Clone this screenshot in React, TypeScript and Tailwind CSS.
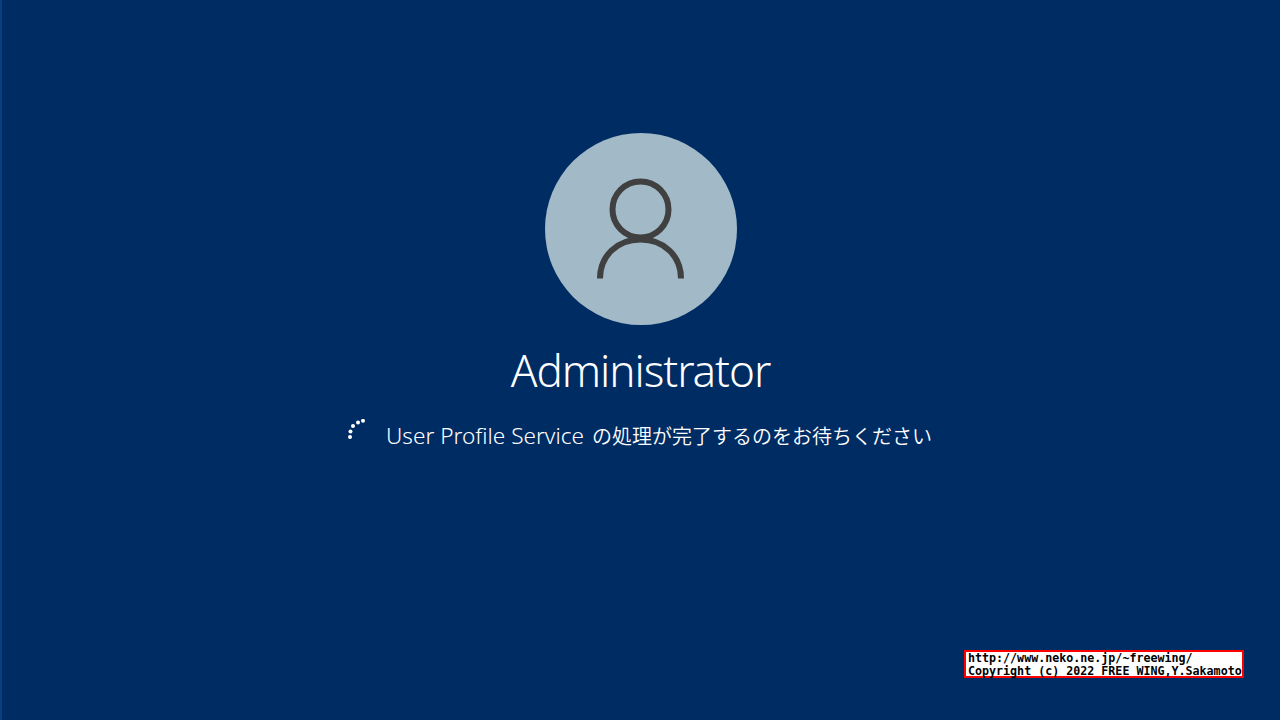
import React from "react";

const uiFont = '"Noto Sans", "Noto Sans CJK JP", sans-serif';

function UserIcon() {
    return (
        <svg viewBox="0 0 192 192" className="block w-full h-full" fill="none" stroke="#404040" strokeWidth="6">
            <circle cx="95.5" cy="76.5" r="28" />
            <path d="M55 145.5 C55 123 72 106.5 95.5 106.5 C119 106.5 136 123 136 145.5" />
        </svg>
    );
}

function Spinner() {
    const dots = [
        [3, 18],
        [3.5, 12.5],
        [6, 7],
        [11, 3.5],
        [16, 1.8],
    ];
    return (
        <svg viewBox="0 0 20 20" className="w-5 h-5 shrink-0" fill="#ffffff">
            {dots.map(([cx, cy]) => (
                <circle key={cx} cx={cx} cy={cy} r="2" />
            ))}
        </svg>
    );
}

export default function App() {
    return (
        <div className="relative w-[1280px] h-[720px] overflow-hidden bg-[#002c64] border-l-2 border-[#0a3f7c]">
            <div className="flex flex-col items-center pt-[133px]">
                <div className="w-[192px] h-[192px] rounded-full bg-[#a2b9c7]">
                    <UserIcon />
                </div>
                <div
                    className="mt-[14px] pr-[1px] text-[44px] leading-[62px] tracking-[-1.05px] font-light text-white"
                    style={{ fontFamily: uiFont }}
                >
                    Administrator
                </div>
                <div className="flex items-start gap-[19px] mt-[18px] pr-[3px]">
                    <Spinner />
                    <div className="flex items-baseline gap-[8px] mt-[2px] text-white" style={{ fontFamily: uiFont }}>
                        <span className="text-[22.6px] leading-[30px] font-[350]">User Profile Service</span>
                        <span className="text-[20px] leading-[30px] font-[350]">の処理が完了するのをお待ちください</span>
                    </div>
                </div>
            </div>
            <div className="absolute left-[962px] top-[650px] w-[280px] h-[28px] border-2 border-[#ff0000] bg-white pl-[2px] text-[11.67px] leading-[13px] font-bold text-black whitespace-pre font-['DejaVu_Sans_Mono',monospace]">
                <div>http://www.neko.ne.jp/~freewing/</div>
                <div>Copyright (c) 2022 FREE WING,Y.Sakamoto</div>
            </div>
        </div>
    );
}
